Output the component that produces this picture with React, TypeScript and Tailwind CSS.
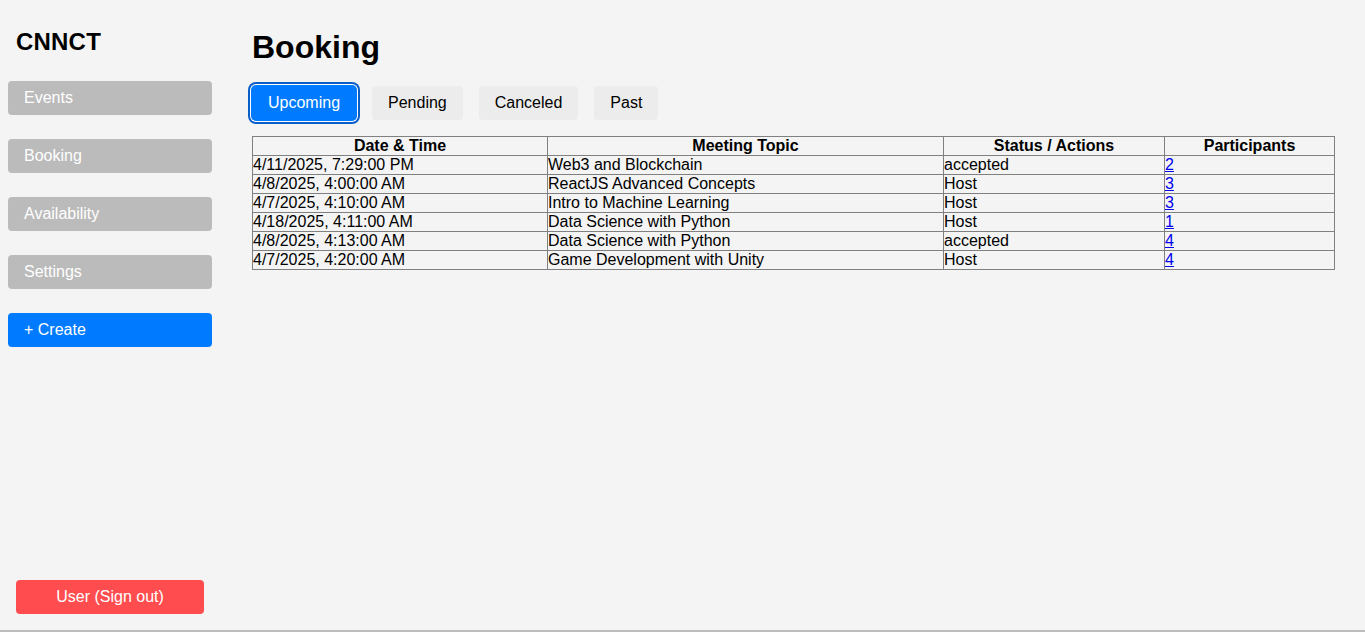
import React from "react";

const rows = [
  ["4/11/2025, 7:29:00 PM", "Web3 and Blockchain", "accepted", "2"],
  ["4/8/2025, 4:00:00 AM", "ReactJS Advanced Concepts", "Host", "3"],
  ["4/7/2025, 4:10:00 AM", "Intro to Machine Learning", "Host", "3"],
  ["4/18/2025, 4:11:00 AM", "Data Science with Python", "Host", "1"],
  ["4/8/2025, 4:13:00 AM", "Data Science with Python", "accepted", "4"],
  ["4/7/2025, 4:20:00 AM", "Game Development with Unity", "Host", "4"],
];

const navItems = ["Events", "Booking", "Availability", "Settings"];

export default function App() {
  return (
    <div
      className="box-border flex h-[632px] w-full border-b-2 border-[#bdbdbd] bg-[#f4f4f4] text-black"
      style={{ fontFamily: '"Liberation Sans", Arial, sans-serif' }}
    >
      <aside className="flex w-[220px] shrink-0 flex-col px-2 pt-[28px] pb-4">
        <div className="px-2 text-[24px] font-bold leading-[28px] tracking-[0.2px]">CNNCT</div>
        <nav className="mt-[25px] flex flex-col gap-6">
          {navItems.map((n) => (
            <div
              key={n}
              className="h-[34px] rounded-[4px] bg-[#bbbbbb] px-4 py-2 text-[16px] leading-[18px] text-white"
            >
              {n}
            </div>
          ))}
          <div className="h-[34px] rounded-[4px] bg-[#007bff] px-4 py-2 text-[16px] leading-[18px] text-white">
            + Create
          </div>
        </nav>
        <div className="mx-2 mt-auto flex h-[34px] items-center justify-center rounded-[4px] bg-[#ff4d4f] text-[16px] leading-[18px] text-white">
          User (Sign out)
        </div>
      </aside>
      <main className="flex-1 pl-8 pt-[29px]">
        <h1 className="text-[32px] font-bold leading-[37px]">Booking</h1>
        <div className="mt-[20px] flex items-center gap-4">
          <button className="-m-px flex h-[36px] items-center rounded-[5px] bg-[#007bff] px-[17px] text-[16px] leading-[18px] text-white shadow-[0_0_0_1px_#ffffff,0_0_0_3px_#0b5dc8]">
            Upcoming
          </button>
          <button className="flex h-[34px] items-center rounded-[4px] bg-[#ececec] px-4 text-[16px] leading-[18px]">
            Pending
          </button>
          <button className="flex h-[34px] items-center rounded-[4px] bg-[#ececec] px-4 text-[16px] leading-[18px]">
            Canceled
          </button>
          <button className="flex h-[34px] items-center rounded-[4px] bg-[#ececec] px-4 text-[16px] leading-[18px]">
            Past
          </button>
        </div>
        <table className="mt-[16px] w-[1082px] table-fixed border-collapse border border-[#808080] text-[16px] leading-[18px]">
          <colgroup>
            <col className="w-[295px]" />
            <col className="w-[396px]" />
            <col className="w-[221px]" />
            <col className="w-[170px]" />
          </colgroup>
          <thead>
            <tr>
              {["Date & Time", "Meeting Topic", "Status / Actions", "Participants"].map((h) => (
                <th key={h} className="border border-[#808080] px-0 py-0 text-center font-bold">
                  {h}
                </th>
              ))}
            </tr>
          </thead>
          <tbody>
            {rows.map((r, i) => (
              <tr key={i}>
                <td className="border border-[#808080] px-0 py-0 whitespace-nowrap">{r[0]}</td>
                <td className="border border-[#808080] px-0 py-0 whitespace-nowrap">{r[1]}</td>
                <td className="border border-[#808080] px-0 py-0 whitespace-nowrap">{r[2]}</td>
                <td className="border border-[#808080] px-0 py-0">
                  <a href="#" className="text-[#0000ee] underline">
                    {r[3]}
                  </a>
                </td>
              </tr>
            ))}
          </tbody>
        </table>
      </main>
    </div>
  );
}
